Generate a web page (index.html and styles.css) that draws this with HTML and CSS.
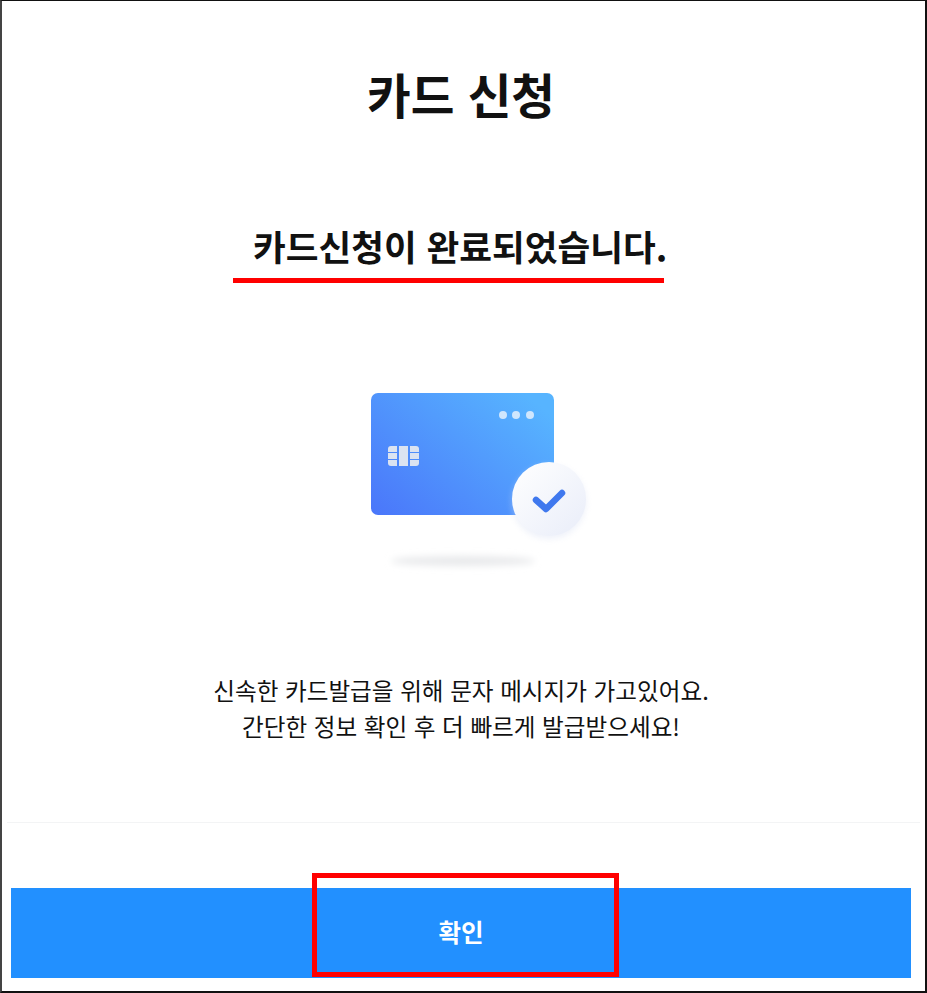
FILE: index.html
```html
<!DOCTYPE html>
<html lang="ko">
<head>
<meta charset="utf-8">
<title>카드 신청</title>
<link rel="stylesheet" href="styles.css">
</head>
<body>
<main class="frame">
  <h1 class="title">카드 신청</h1>
  <div class="status">
    <h2 class="done">카드신청이 완료되었습니다.</h2>
    <div class="underline"></div>
  </div>
  <div class="illust">
    <svg width="250" height="200" viewBox="0 0 250 200" xmlns="http://www.w3.org/2000/svg">
      <defs>
        <linearGradient id="card" x1="0" y1="1" x2="1" y2="0.2">
          <stop offset="0" stop-color="#4a76fa"/>
          <stop offset="1" stop-color="#57b4ff"/>
        </linearGradient>
        <linearGradient id="disc" x1="0" y1="0" x2="1" y2="1">
          <stop offset="0" stop-color="#ffffff"/>
          <stop offset="1" stop-color="#e9edf9"/>
        </linearGradient>
        <filter id="soft" x="-30%" y="-200%" width="160%" height="500%"><feGaussianBlur stdDeviation="3.5"/></filter>
        <filter id="glow" x="-30%" y="-30%" width="160%" height="160%"><feGaussianBlur stdDeviation="3"/></filter>
      </defs>
      <ellipse cx="113" cy="181" rx="72" ry="5" fill="#e8e9eb" filter="url(#soft)"/>
      <rect x="21" y="13" width="183" height="122" rx="7" fill="url(#card)"/>
      <circle cx="153" cy="35" r="4" fill="#cfe6fd"/>
      <circle cx="166" cy="35" r="4" fill="#cfe6fd"/>
      <circle cx="180" cy="35" r="4" fill="#cfe6fd"/>
      <g fill="#dbe3f1">
        <path d="M41 66h6v6h-9v-3a3 3 0 0 1 3-3z"/>
        <rect x="38" y="73" width="9" height="6"/>
        <path d="M38 80h9v6h-6a3 3 0 0 1-3-3z"/>
        <rect x="49" y="66" width="9" height="20"/>
        <path d="M60 66h6a3 3 0 0 1 3 3v3h-9z"/>
        <rect x="60" y="73" width="9" height="6"/>
        <path d="M60 80h9v3a3 3 0 0 1-3 3h-6z"/>
      </g>
      <circle cx="199" cy="122" r="37" fill="#d6ddf2" opacity=".4" filter="url(#glow)"/>
      <circle cx="199" cy="119" r="37" fill="url(#disc)"/>
      <path d="M186 120l10 9 16-16" fill="none" stroke="#3f78ee" stroke-width="6.5" stroke-linecap="round" stroke-linejoin="round"/>
    </svg>
  </div>
  <p class="message">신속한 카드발급을 위해 문자 메시지가 가고있어요.<br>간단한 정보 확인 후 더 빠르게 발급받으세요!</p>
  <div class="rule"></div>
  <button class="confirm" type="button">확인</button>
  <div class="highlight"></div>
</main>
</body>
</html>
```
FILE: styles.css
```css
* { box-sizing: border-box; }
html, body { margin: 0; padding: 0; background: #fff; }
.frame {
  position: relative;
  width: 927px;
  height: 993px;
  border-style: solid;
  border-color: #111;
  border-left-color: #444;
  border-width: 1px 2px 2px 2px;
  padding-right: 5px;
  display: flex;
  flex-direction: column;
  align-items: center;
  font-family: "Noto Sans CJK KR", "Noto Sans", sans-serif;
  color: #111;
  overflow: hidden;
}
.title {
  margin: 58px 0 0;
  font-size: 47.5px;
  line-height: 70px;
  font-weight: 700;
}
.status {
  margin: 92px 25px 0 0;
  width: 431px;
  display: flex;
  flex-direction: column;
  align-items: flex-start;
}
.done {
  margin: 0 0 0 20px;
  font-size: 35.6px;
  line-height: 50px;
  font-weight: 700;
  white-space: nowrap;
}
.underline {
  width: 431px;
  height: 5px;
  background: #f00;
  margin-top: 7px;
}
.illust {
  margin: 97px 0 0 28px;
  height: 200px;
}
.illust svg { display: block; }
.message {
  margin: 92px 0 0;
  font-size: 23.6px;
  line-height: 36px;
  text-align: center;
  font-weight: 400;
}
.rule {
  align-self: stretch;
  height: 1px;
  background: #f3f4f5;
  margin: 78px 0 0 5px;
}
.confirm {
  margin-top: 65px;
  width: 900px;
  height: 90px;
  flex: none;
  border: 0;
  padding: 0 0 3px;
  background: #2290ff;
  color: #fff;
  font: 700 24.5px "Noto Sans CJK KR", sans-serif;
}
.highlight {
  position: absolute;
  left: 310px;
  top: 872px;
  width: 307px;
  height: 104px;
  border: 5px solid #f00;
}
```
